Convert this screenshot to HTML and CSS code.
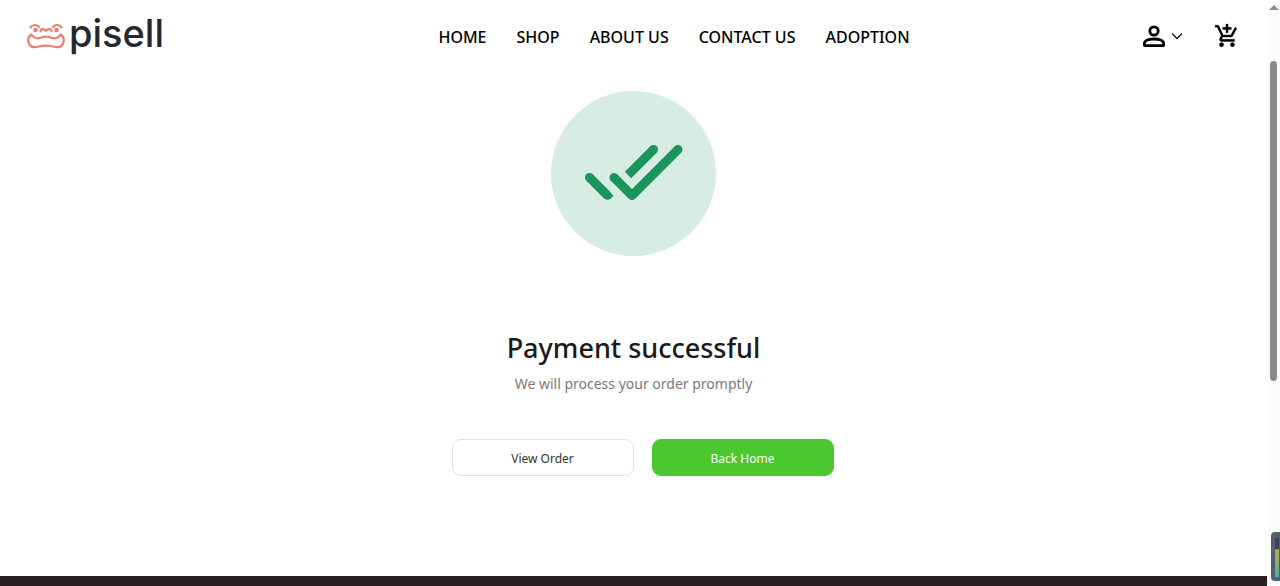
FILE: index.html
```html
<!DOCTYPE html>
<html lang="en">
<head>
<meta charset="utf-8">
<meta name="viewport" content="width=device-width, initial-scale=1">
<title>Payment successful</title>
<link rel="stylesheet" href="styles.css">
</head>
<body>
<div class="shell">
  <div class="page">
    <header class="header">
      <a class="logo" href="#">
        <svg class="logo-mark" viewBox="0 0 38 26" fill="none" stroke="#ea8073" stroke-width="2.200" stroke-linecap="round" stroke-linejoin="round" aria-hidden="true">
          <path d="M3.500 4.500C5 1.500 9.500 1 12 4M26 4C28.500 1 33 1.500 34.500 4.500"/>
          <path d="M13.500 8.500C13.500 5.500 17 5.500 19 8C21 5.500 24.500 5.500 24.500 8.500"/>
          <path d="M4.500 11.500C1.500 13.500 .5 17 2 20.500C3.500 24.500 8 24.700 12 23.500C16.500 22.500 21.500 22.500 26 23.500C30 24.700 34.500 24.500 36 20.500C37.500 17 36.500 13.500 33.500 11.500C31 15.800 27 15.800 23.500 14.500C20.500 13.300 17.500 13.300 14.500 14.500C11 15.800 7 15.800 4.500 11.500Z"/>
          <circle cx="8.500" cy="7" r="1.200" fill="#ea8073"/>
          <circle cx="29.500" cy="7" r="1.200" fill="#ea8073"/>
        </svg>
        <span class="logo-text">pisell</span>
      </a>
      <nav class="nav">
        <a href="#">HOME</a>
        <a href="#">SHOP</a>
        <a href="#">ABOUT US</a>
        <a href="#">CONTACT US</a>
        <a href="#">ADOPTION</a>
      </nav>
      <div class="actions">
        <button class="account" type="button" aria-label="Account">
          <svg width="24" height="24" viewBox="0 0 24 24" fill="none" stroke="#000" stroke-width="2.800" aria-hidden="true">
            <circle cx="12" cy="7" r="4.200"/>
            <path d="M2.400 21.600V19.500C2.400 16.500 7 15 12 15S21.600 16.500 21.600 19.500V21.600Z" stroke-linejoin="round"/>
          </svg>
          <svg width="12" height="8" viewBox="0 0 12 8" fill="none" stroke="#111" stroke-width="1.300" aria-hidden="true"><path d="M1 1.500L6 6.500L11 1.500"/></svg>
        </button>
        <button class="cart" type="button" aria-label="Cart">
          <svg width="26" height="26" viewBox="0 0 24 24" stroke="#000" stroke-width=".3" aria-hidden="true"><path d="M11 9h2V6h3V4h-3V1h-2v3H8v2h3v3zm-4 9c-1.100 0-1.990.9-1.990 2S5.900 22 7 22s2-.9 2-2-.9-2-2-2zm10 0c-1.100 0-1.990.9-1.990 2s.89 2 1.990 2 2-.9 2-2-.9-2-2-2zm-8.900-5h7.450c.75 0 1.410-.41 1.750-1.030l3.860-7.010L19.420 4l-3.870 7H8.530L4.270 2H1v2h2l3.600 7.590-1.350 2.440C4.520 15.370 5.480 17 7 17h12v-2H7l1.100-2z"/></svg>
        </button>
      </div>
    </header>
    <main class="result">
      <div class="badge">
        <svg width="100" height="58" viewBox="0 0 100 58" fill="none" stroke="#1c955c" stroke-width="9" aria-hidden="true">
          <path d="M5.500 32.500L23.500 50.500M69.500 4.500L44 30"/>
          <path d="M30 32.500L48 50.500L94 4.500" stroke-linecap="round" stroke-linejoin="round"/>
          <g fill="#1c955c" stroke="none"><circle cx="5.500" cy="32.500" r="4.500"/><circle cx="69.500" cy="4.500" r="4.500"/><path d="M20 53.200Q23.500 56.500 27 53.200L29.500 50.700L24 45Z"/></g>
        </svg>
      </div>
      <h1 class="title">Payment successful</h1>
      <p class="subtitle">We will process your order promptly</p>
      <div class="buttons">
        <button class="btn" type="button">View Order</button>
        <button class="btn btn-primary" type="button">Back Home</button>
      </div>
    </main>
    <footer class="footer"></footer>
  </div>
  <div class="scrollbar" aria-hidden="true">
    <div class="scroll-arrow"></div>
    <div class="scroll-thumb"></div>
  </div>
  <div class="meter" aria-hidden="true"><div class="meter-fill"></div></div>
</div>
</body>
</html>
```
FILE: styles.css
```css
* { box-sizing: border-box; }
body {
  margin: 0;
  background: #fff;
  color: #000;
  font-family: "Noto Sans", "Open Sans", sans-serif;
}
a { color: inherit; text-decoration: none; }
button { font: inherit; color: inherit; cursor: pointer; }
svg { display: block; }

.shell {
  position: relative;
  display: flex;
  height: 100vh;
  overflow: hidden;
}
.page {
  flex: 1;
  display: flex;
  flex-direction: column;
}

.header {
  display: flex;
  align-items: center;
  justify-content: space-between;
  height: 72px;
  padding: 0 27px;
}
.logo {
  display: flex;
  align-items: center;
  gap: 4px;
  padding-right: 42px;
}
.logo-mark { width: 38px; height: 26px; }
.logo-text {
  padding-bottom: 6px;
  font-family: Inter, sans-serif;
  font-size: 38px;
  font-weight: 500;
  line-height: 44px;
  color: #25282e;
}
.nav {
  display: flex;
  gap: 30px;
  padding-top: 2px;
  font-size: 16px;
  font-weight: 500;
  line-height: 24px;
}
.actions {
  display: flex;
  align-items: center;
  gap: 31px;
}
.account, .cart {
  display: flex;
  align-items: center;
  gap: 5px;
  padding: 0;
  border: 0;
  background: none;
}

.result {
  flex: 1;
  display: flex;
  flex-direction: column;
  align-items: center;
  padding-top: 19px;
}
.badge {
  display: flex;
  align-items: center;
  justify-content: center;
  width: 165px;
  height: 165px;
  border-radius: 50%;
  background: #d7ece3;
}
.title {
  margin: 71px 0 0;
  font-size: 27px;
  font-weight: 500;
  line-height: 42px;
  color: #1a1a1a;
}
.subtitle {
  margin: 3px 0 0;
  font-size: 14px;
  line-height: 24px;
  color: #7a7a7a;
}
.buttons {
  display: flex;
  gap: 18px;
  margin-top: 43px;
  padding-left: 18px;
}
.btn {
  width: 182px;
  height: 37px;
  padding: 2px 0 0;
  border: 1px solid #e2e2e2;
  border-radius: 9px;
  background: #fff;
  font-size: 12px;
  color: #333;
}
.btn-primary {
  border-color: #4bc730;
  background: #4bc730;
  color: #fff;
}
.footer {
  height: 10px;
  background: #2b1f22;
}

.scrollbar {
  display: flex;
  flex-direction: column;
  align-items: center;
  width: 13px;
  padding-top: 5px;
  background: #fcfcfc;
}
.scroll-arrow {
  border: 5px solid transparent;
  border-top-width: 0;
  border-bottom-color: #8b8b8b;
}
.scroll-thumb {
  width: 7px;
  height: 55%;
  margin-top: 51px;
  border-radius: 4px;
  background: #8b8b8b;
}
.meter {
  position: absolute;
  right: 0;
  bottom: 5px;
  width: 9px;
  height: 49px;
  padding: 6px 1px 4px 4px;
  border-radius: 4px 0 0 4px;
  background: #555d70;
}
.meter-fill {
  height: 100%;
  background: linear-gradient(#3e4352 0 28%, #b5a55c 30%, #8fae70 60%, #45b3a0);
}
```
